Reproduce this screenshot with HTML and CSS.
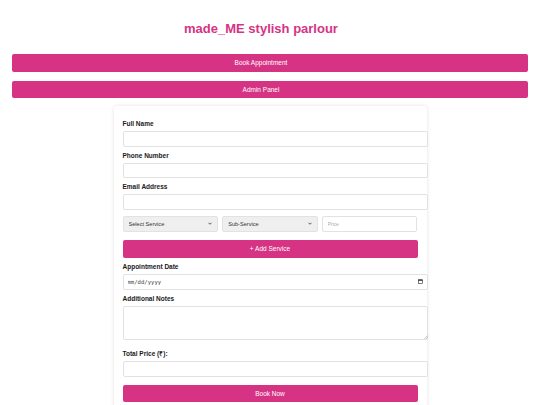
FILE: index.html
```html
<!DOCTYPE html>
<html lang="en">
<head>
<meta charset="utf-8">
<title>made_ME stylish parlour</title>
<link rel="stylesheet" href="styles.css">
</head>
<body>
<h1 class="title">made_ME stylish parlour</h1>
<nav class="nav">
  <button class="btn nav-btn">Book Appointment</button>
  <button class="btn nav-btn">Admin Panel</button>
</nav>
<form class="card">
  <label class="lbl">Full Name</label>
  <input class="field" type="text">
  <label class="lbl">Phone Number</label>
  <input class="field" type="text">
  <label class="lbl">Email Address</label>
  <input class="field" type="email">
  <div class="service-row">
    <div class="sel-wrap">
      <select class="sel"><option>Select Service</option></select>
      <svg class="chev" viewBox="0 0 8 5" width="4" height="3"><path d="M1 1 L4 4 L7 1" fill="none" stroke="#333" stroke-width="1.6"/></svg>
    </div>
    <div class="sel-wrap">
      <select class="sel"><option>Sub-Service</option></select>
      <svg class="chev" viewBox="0 0 8 5" width="4" height="3"><path d="M1 1 L4 4 L7 1" fill="none" stroke="#333" stroke-width="1.6"/></svg>
    </div>
    <input class="price" type="text" placeholder="Price">
  </div>
  <button type="button" class="btn add-btn">+ Add Service</button>
  <label class="lbl">Appointment Date</label>
  <div class="date-wrap">
    <input class="field date" type="text" placeholder="mm/dd/yyyy">
    <svg class="cal" viewBox="0 0 10 10" width="5" height="5"><rect x="1" y="1.5" width="8" height="7.5" fill="none" stroke="#222" stroke-width="1.2"/><rect x="1" y="1.5" width="8" height="2" fill="#222"/></svg>
  </div>
  <label class="lbl">Additional Notes</label>
  <div class="notes-wrap">
    <textarea class="field notes"></textarea>
    <svg class="grip" viewBox="0 0 4 4" width="4" height="4"><path d="M0.5 3.8 L3.8 0.5 M2.2 3.8 L3.8 2.2" stroke="#999" stroke-width="0.6"/></svg>
  </div>
  <label class="lbl lbl-total">Total Price (₹):</label>
  <input class="field" type="text">
  <button type="button" class="btn book-btn">Book Now</button>
</form>
</body>
</html>
```
FILE: styles.css
```css
* { font-family: "Liberation Sans", Arial, sans-serif; }
html, body { margin: 0; padding: 0; background: #fff; }
body { overflow: hidden; height: 405px; }

.title {
  margin: 21px 0 18px;
  padding-right: 18px;
  font-size: 13px;
  line-height: 15px;
  font-weight: bold;
  text-align: center;
  color: #d63384;
}

.nav {
  display: flex;
  flex-direction: column;
  gap: 9px;
  margin: 0 12px;
}

.btn {
  display: block;
  border: none;
  border-radius: 2px;
  background: #d63384;
  color: #fff;
  font-size: 6.5px;
  padding: 0;
  cursor: pointer;
}
.nav-btn { height: 17.5px; width: 100%; padding-right: 18px; }

.card {
  width: 295px;
  margin: 8px auto 0;
  padding: 9px;
  background: #fff;
  border-radius: 4px;
  box-shadow: 0 0 4px rgba(0, 0, 0, 0.12);
}

.lbl {
  display: block;
  margin: 5px 0 3px;
  font-size: 6.5px;
  line-height: 8px;
  font-weight: bold;
  color: #1a1a1a;
}
.lbl-total { margin-top: 10px; }

.field {
  display: block;
  width: 100%;
  height: 13.5px;
  box-sizing: content-box;
  padding: 0 4px;
  margin: 0;
  border: 1px solid #e2e2e2;
  border-radius: 2px;
  font-size: 5.6px;
  background: #fff;
  outline: none;
}
.date-wrap { position: relative; }
.field.date {
  height: 14px;
  font-family: "DejaVu Sans Mono", "Liberation Mono", monospace;
  font-size: 5.6px;
}
.field.date::placeholder { color: #444; }
.cal { position: absolute; right: -5px; top: 5.5px; }
.notes-wrap { position: relative; }
.notes { height: 32.5px; resize: none; }
.grip { position: absolute; right: -10px; bottom: 1px; }

.service-row {
  display: grid;
  grid-template-columns: 1fr 1fr 1fr;
  gap: 4px;
  margin-top: 6px;
}
.sel-wrap { position: relative; }
.chev { position: absolute; right: 6px; top: 6.5px; pointer-events: none; }
.sel, .price {
  display: block;
  box-sizing: border-box;
  width: 100%;
  height: 16px;
  margin: 0;
  border: 1px solid #e2e2e2;
  border-radius: 2px;
  font-size: 5.6px;
  padding: 0 5px;
  color: #333;
  outline: none;
}
.sel { background: #efefef; appearance: none; -webkit-appearance: none; }
.price { background: #fff; }
.price::placeholder { color: #aaa; font-size: 4.8px; }

.add-btn { width: 100%; height: 17.5px; margin-top: 8.5px; }
.book-btn { width: 100%; height: 17.5px; margin-top: 8.3px; }
```
